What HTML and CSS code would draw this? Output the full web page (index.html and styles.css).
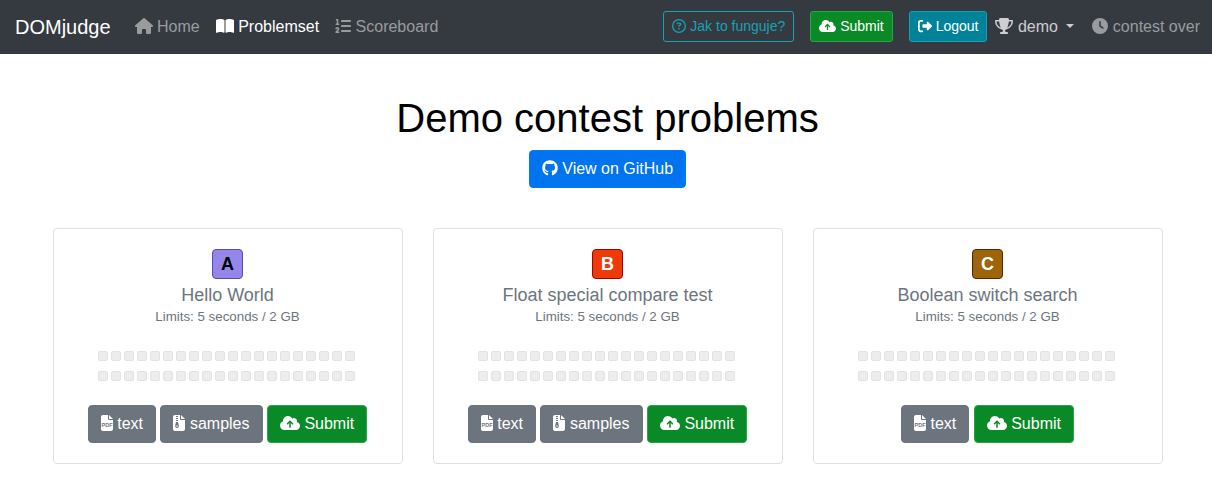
FILE: index.html
```html
<!DOCTYPE html>
<html lang="en">
<head>
<meta charset="utf-8">
<meta name="viewport" content="width=device-width, initial-scale=1">
<title>Demo contest problems</title>
<link rel="stylesheet" href="styles.css">
</head>
<body>
<svg class="sprite" aria-hidden="true">
  <symbol id="house" viewBox="0 0 576 512"><path d="M575.8 255.5c0 18-15 32.1-32 32.1h-32l.7 160.2c0 2.700-.2 5.400-.5 8.100V472c0 22.100-17.900 40-40 40H392c-22.100 0-40-17.900-40-40V384c0-17.700-14.300-32-32-32H256c-17.700 0-32 14.300-32 32v88c0 22.100-17.900 40-40 40H104c-22.100 0-40-17.900-40-40V287.600H32c-18 0-32-14-32-32.100c0-9 3-17 10-24L266.400 8c7-7 15-8 22-8s15 2 21 7L564.800 231.500c8 7 12 15 11 24z"/></symbol>
  <symbol id="book" viewBox="0 0 576 512"><path d="M249.600 471.500c10.800 3.800 22.400-4.100 22.400-15.500V78.600c0-4.200-1.600-8.400-5-11C247.400 52 202.400 32 144 32C93.500 32 46.300 45.300 18.100 56.100C6.800 60.500 0 71.700 0 83.800V454.100c0 11.900 12.800 20.200 24.100 16.500C55.600 460.100 105.500 448 144 448c33.900 0 79 14 105.600 23.500zm76.800 0C353 462 398.100 448 432 448c38.500 0 88.400 12.100 119.900 22.600c11.300 3.800 24.100-4.600 24.100-16.500V83.800c0-12.100-6.800-23.300-18.100-27.600C529.700 45.300 482.500 32 432 32c-58.400 0-103.400 20-123 35.600c-3.300 2.600-5 6.800-5 11V456c0 11.400 11.700 19.300 22.400 15.500z"/></symbol>
  <symbol id="list" viewBox="0 0 512 512"><path d="M24 56c0-13.300 10.700-24 24-24H80c13.300 0 24 10.700 24 24V176h16c13.300 0 24 10.700 24 24s-10.700 24-24 24H40c-13.300 0-24-10.700-24-24s10.700-24 24-24H56V80H48C34.700 80 24 69.300 24 56zM86.700 341.200c-6.500-7.400-18.300-6.900-24 1.200L51.500 357.900c-7.700 10.800-22.700 13.300-33.500 5.600s-13.300-22.700-5.600-33.500l11.100-15.600c23.700-33.200 72.300-35.600 99.200-4.900c21.300 24.400 20.800 60.900-1.100 84.700L86.800 432H120c13.300 0 24 10.700 24 24s-10.700 24-24 24H32c-9.500 0-18.200-5.600-22-14.400s-2.100-18.900 4.300-25.900l72-78c5.300-5.800 5.400-14.600 .3-20.500zM224 64H480c17.700 0 32 14.300 32 32s-14.300 32-32 32H224c-17.700 0-32-14.300-32-32s14.300-32 32-32zM224 224H480c17.700 0 32 14.300 32 32s-14.300 32-32 32H224c-17.700 0-32-14.300-32-32s14.300-32 32-32zM224 384H480c17.700 0 32 14.300 32 32s-14.300 32-32 32H224c-17.700 0-32-14.300-32-32s14.300-32 32-32z"/></symbol>
  <symbol id="question" viewBox="0 0 512 512"><path d="M464 256A208 208 0 1 0 48 256a208 208 0 1 0 416 0zM0 256a256 256 0 1 1 512 0A256 256 0 1 1 0 256zm169.800-90.700c7.900-22.300 29.100-37.300 52.800-37.300h58.300c34.900 0 63.100 28.300 63.100 63.100c0 22.600-12.100 43.500-31.700 54.800L280 264.400c-.2 13-10.900 23.600-24 23.600c-13.300 0-24-10.700-24-24V250.500c0-8.600 4.600-16.500 12.100-20.800l44.300-25.400c4.700-2.700 7.600-7.700 7.600-13.100c0-8.400-6.800-15.100-15.100-15.100H222.600c-3.400 0-6.400 2.100-7.500 5.300l-.4 1.200c-4.400 12.500-18.200 19-30.600 14.600s-19-18.200-14.600-30.600l.4-1.200zM224 352a32 32 0 1 1 64 0 32 32 0 1 1 -64 0z"/></symbol>
  <symbol id="cloud" viewBox="0 0 640 512"><path d="M144 480C64.500 480 0 415.500 0 336c0-62.800 40.200-116.200 96.200-135.900c-.1-2.700-.2-5.400-.2-8.100c0-88.400 71.600-160 160-160c59.300 0 111 32.200 138.700 80.200C409.900 102 428.300 96 448 96c53 0 96 43 96 96c0 12.200-2.300 23.800-6.400 34.600C596 238.400 640 290.100 640 352c0 70.700-57.300 128-128 128H144zm79-217c-9.400 9.400-9.400 24.600 0 33.900s24.600 9.400 33.900 0l39-39V392c0 13.300 10.700 24 24 24s24-10.700 24-24V257.900l39 39c9.400 9.400 24.600 9.400 33.900 0s9.400-24.600 0-33.900l-80-80c-9.400-9.400-24.600-9.400-33.900 0l-80 80z"/></symbol>
  <symbol id="exit" viewBox="0 0 512 512"><path d="M377.900 105.900L500.700 228.700c7.200 7.200 11.300 17.100 11.300 27.300s-4.100 20.100-11.300 27.300L377.900 406.100c-6.400 6.400-15 9.900-24 9.900c-18.700 0-33.900-15.200-33.900-33.900l0-62.100-128 0c-17.700 0-32-14.300-32-32l0-64c0-17.700 14.300-32 32-32l128 0 0-62.100c0-18.700 15.200-33.900 33.900-33.900c9 0 17.600 3.600 24 9.900zM160 96L96 96c-17.700 0-32 14.300-32 32l0 256c0 17.700 14.300 32 32 32l64 0c17.700 0 32 14.300 32 32s-14.300 32-32 32l-64 0c-53 0-96-43-96-96L0 128C0 75 43 32 96 32l64 0c17.700 0 32 14.300 32 32s-14.300 32-32 32z"/></symbol>
  <symbol id="trophy" viewBox="0 0 576 512"><path d="M400 0H176c-26.500 0-48.100 21.800-47.100 48.200c.2 5.300 .4 10.600 .7 15.800H24C10.700 64 0 74.700 0 88c0 92.600 33.500 157 78.500 200.700c44.300 43.100 98.300 64.800 138.100 75.800c23.400 6.500 39.400 26 39.400 45.600c0 20.900-17 37.900-37.900 37.900H192c-17.700 0-32 14.300-32 32s14.300 32 32 32H384c17.700 0 32-14.300 32-32s-14.300-32-32-32H357.900C337 448 320 431 320 410.100c0-19.600 15.900-39.200 39.400-45.600c39.900-11 93.900-32.700 138.200-75.800C542.500 245 576 180.600 576 88c0-13.300-10.700-24-24-24H446.400c.3-5.200 .5-10.400 .7-15.800C448.100 21.800 426.500 0 400 0zM48.900 112h84.400c9.100 90.100 29.200 150.300 51.900 190.600c-24.900-11-50.800-26.500-73.200-48.300c-32-31.100-58-76-63-142.300zM464.100 254.300c-22.400 21.800-48.300 37.300-73.200 48.300c22.700-40.300 42.800-100.500 51.900-190.600h84.400c-5.100 66.300-31.100 111.200-63 142.300z"/></symbol>
  <symbol id="clock" viewBox="0 0 512 512"><path d="M256 0a256 256 0 1 1 0 512A256 256 0 1 1 256 0zM232 120V256c0 8 4 15.500 10.700 20l96 64c11 7.400 25.900 4.400 33.300-6.700s4.400-25.900-6.700-33.300L280 243.200V120c0-13.300-10.700-24-24-24s-24 10.700-24 24z"/></symbol>
  <symbol id="github" viewBox="0 0 496 512"><path d="M244.800 8C106.100 8 0 113.300 0 252c0 110.900 69.800 205.800 169.500 239.200 12.800 2.300 17.300-5.600 17.300-12.100 0-6.200-.3-40.400-.3-61.400 0 0-70 15-84.700-29.800 0 0-11.400-29.100-27.800-36.600 0 0-22.900-15.700 1.600-15.400 0 0 24.900 2 38.600 25.800 21.900 38.600 58.600 27.500 72.900 20.900 2.300-16 8.800-27.100 16-33.700-55.900-6.200-112.300-14.300-112.300-110.500 0-27.500 7.600-41.300 23.600-58.900-2.600-6.500-11.100-33.300 2.600-67.900 20.900-6.500 69 27 69 27 20-5.600 41.500-8.500 62.800-8.500s42.800 2.900 62.800 8.500c0 0 48.100-33.600 69-27 13.700 34.700 5.200 61.400 2.600 67.900 16 17.700 25.800 31.500 25.800 58.900 0 96.500-58.900 104.200-114.800 110.500 9.200 7.900 17 22.900 17 46.400 0 33.700-.3 75.400-.3 83.600 0 6.500 4.600 14.400 17.300 12.100C428.200 457.800 496 362.900 496 252 496 113.300 383.500 8 244.800 8z"/></symbol>
  <symbol id="zip" viewBox="0 0 384 512"><path fill-rule="evenodd" d="M64 0C28.700 0 0 28.700 0 64v384c0 35.300 28.700 64 64 64h256c35.300 0 64-28.700 64-64V160H256c-17.700 0-32-14.300-32-32V0zM256 0v128h128zM96 32h64v32H96zM96 96h64v32H96zM96 160h64v32H96zM96 224h64l24 104c14 50-18 88-56 88s-70-38-56-88zM112 336a16 16 0 0 0 0 32h32a16 16 0 0 0 0-32z"/></symbol>
</svg>

<nav class="navbar">
  <a class="brand" href="#">DOMjudge</a>
  <a class="nav-link" href="#"><svg class="icon w18"><use href="#house"/></svg> Home</a>
  <a class="nav-link active" href="#"><svg class="icon w18"><use href="#book"/></svg> Problemset</a>
  <a class="nav-link" href="#"><svg class="icon w16"><use href="#list"/></svg> Scoreboard</a>
  <div class="nav-right">
    <a class="btn btn-sm btn-outline" href="#"><svg class="icon w14"><use href="#question"/></svg> Jak to funguje?</a>
    <button class="btn btn-sm btn-success" type="button"><svg class="icon w17"><use href="#cloud"/></svg> Submit</button>
    <button class="btn btn-sm btn-info" type="button"><svg class="icon w14"><use href="#exit"/></svg> Logout</button>
    <a class="nav-link user" href="#"><svg class="icon w18"><use href="#trophy"/></svg> demo <span class="caret"></span></a>
    <span class="status"><svg class="icon w16"><use href="#clock"/></svg> contest over</span>
  </div>
</nav>

<main class="page">
  <h1>Demo contest problems</h1>
  <a class="btn btn-primary" href="#"><svg class="icon w16"><use href="#github"/></svg> View on GitHub</a>
  <div class="cards" id="cards"></div>
</main>
<script src="problems.js"></script>
</body>
</html>
```
FILE: styles.css
```css
*, *::before, *::after { box-sizing: border-box; }

body {
  margin: 0;
  background: #fff;
  color: #000;
  font-family: "Liberation Sans", Arial, sans-serif;
  font-size: 16px;
  line-height: 24px;
}

a { text-decoration: none; }

.sprite { position: absolute; width: 0; height: 0; }

.icon {
  display: inline-block;
  height: 1em;
  fill: currentColor;
  vertical-align: -2px;
}
.w12 { width: 12px; }
.w14 { width: 14px; }
.w16 { width: 16px; }
.w17 { width: 17px; }
.w18 { width: 18px; }
.w20 { width: 20px; }

.pdf-mark {
  fill: #6c757d;
  font: bold 176px "Liberation Sans", Arial, sans-serif;
}

.navbar {
  display: flex;
  align-items: center;
  min-height: 54px;
  padding: 6px 12px 7px 15px;
  background: #343a40;
  white-space: nowrap;
}
.brand {
  margin-right: 16px;
  color: #fff;
  font-size: 20px;
  line-height: 30px;
}
.nav-link { padding: 8px; color: #999c9f; }
.navbar .active { color: #fff; }
.nav-link.user { color: #cccecf; }
.nav-right {
  display: flex;
  align-items: center;
  margin-left: auto;
}
.nav-right .btn-outline,
.nav-right .btn-success { margin-right: 16px; }
.caret {
  display: inline-block;
  margin-left: 4px;
  border: 4px solid transparent;
  border-top-color: currentColor;
  border-bottom: 0;
  vertical-align: 4px;
}
.status { margin-left: 10px; color: #999c9f; }

.btn {
  display: inline-block;
  padding: 6px 12px;
  border: 1px solid transparent;
  border-radius: 4px;
  color: #fff;
  font-family: inherit;
  font-size: 16px;
  line-height: 24px;
  text-align: center;
  cursor: pointer;
}
.btn-sm {
  padding: 4px 8px;
  border-radius: 3px;
  font-size: 14px;
  line-height: 21px;
}
.btn-outline { border-color: #17a2b8; color: #17a2b8; }
.btn-success { border-color: #28a745; background: #0a8a26; }
.btn-info { border-color: #17a2b8; background: #008299; }
.btn-primary { border-color: #007bff; background: #0073ef; }
.btn-secondary { border-color: #6c757d; background: #6c757d; }

.page { padding: 40px 0 30px 3px; text-align: center; }
h1 {
  margin: 0 0 8px;
  font-size: 40px;
  font-weight: 400;
  line-height: 48px;
}
.cards {
  display: grid;
  grid-template-columns: repeat(3, 1fr);
  gap: 30px;
  max-width: 1140px;
  margin: 40px auto 0;
  padding: 0 15px;
}
.card {
  padding: 20px;
  border: 1px solid #dfdfdf;
  border-radius: 4px;
}
.badge {
  display: block;
  width: 31px;
  margin: 0 auto;
  border: 1px solid;
  border-radius: 4px;
  font-size: 18px;
  font-weight: 700;
  line-height: 28px;
}
.badge b { color: #fff; }
.badge-a { border-color: #5b4bb0; background: #9486eb; }
.badge-a b { color: #000; }
.badge-b { border-color: #a50000; background: #ec3a08; }
.badge-c { border-color: #592200; background: #9b640d; }
.card h2 {
  margin: 5px 0 0;
  color: #6c757d;
  font-size: 18px;
  font-weight: 400;
  line-height: 22px;
}
.limits {
  margin: 0;
  color: #6c757d;
  font-size: smaller;
  line-height: 22px;
}
.cases {
  display: grid;
  grid-template-columns: repeat(20, 10px);
  justify-content: center;
  gap: 10px 3px;
  margin: 23px 0 24px;
  padding-right: 3px;
}
.case {
  height: 10px;
  border: 1px solid #e3e3e3;
  border-radius: 2px;
  background: #ededed;
}
```
FILE: problems.js
```js
const problems = [
  { label: 'A', name: 'Hello World', samples: true },
  { label: 'B', name: 'Float special compare test', samples: true },
  { label: 'C', name: 'Boolean switch search', samples: false }
];

const icon = (name, size) => `<svg class="icon ${size}"><use href="#${name}"/></svg>`;

const pdfIcon = `<svg class="icon w12" viewBox="0 0 384 512" aria-hidden="true">
  <path d="M64 0C28.700 0 0 28.700 0 64v384c0 35.300 28.700 64 64 64h256c35.300 0 64-28.700 64-64V160H256c-17.700 0-32-14.300-32-32V0zM256 0v128h128z"/>
  <text class="pdf-mark" x="192" y="370" text-anchor="middle">PDF</text>
</svg>`;

document.getElementById('cards').innerHTML = problems.map(p => `
  <article class="card">
    <span class="badge badge-${p.label.toLowerCase()}"><b>${p.label}</b></span>
    <h2>${p.name}</h2>
    <p class="limits">Limits: 5 seconds / 2 GB</p>
    <div class="cases">${'<span class="case"></span>'.repeat(40)}</div>
    <div class="actions">
      <a class="btn btn-secondary" href="#">${pdfIcon} text</a>
      ${p.samples ? `<a class="btn btn-secondary" href="#">${icon('zip', 'w12')} samples</a>` : ''}
      <button class="btn btn-success" type="button">${icon('cloud', 'w20')} Submit</button>
    </div>
  </article>`).join('');
```
